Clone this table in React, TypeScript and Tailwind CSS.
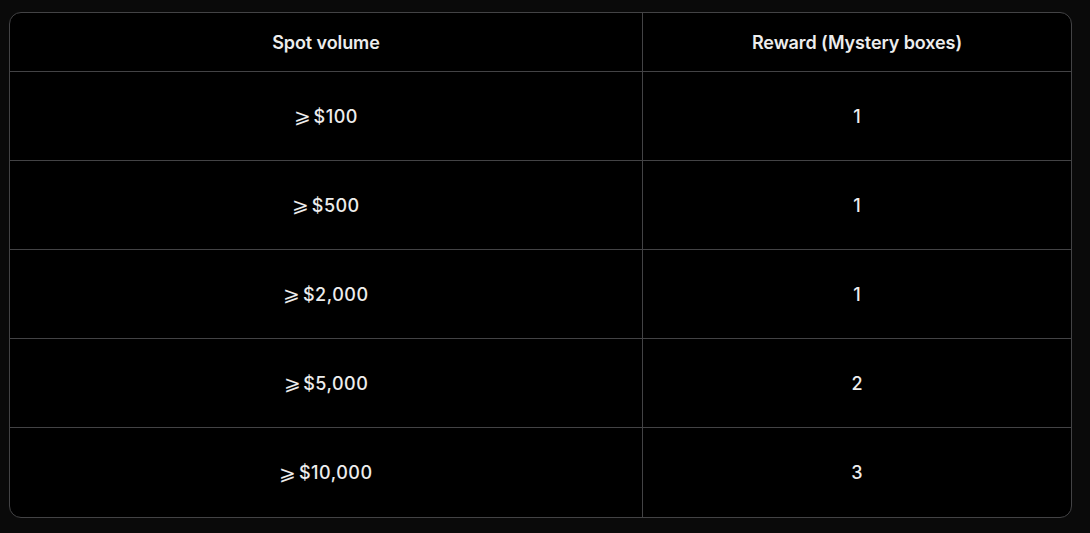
import React from 'react';

const rows = [
  { volume: '$100', reward: '1' },
  { volume: '$500', reward: '1' },
  { volume: '$2,000', reward: '1' },
  { volume: '$5,000', reward: '2' },
  { volume: '$10,000', reward: '3' },
];

const App: React.FC = () => {
  return (
    <div className="min-h-screen w-full bg-[#0a0a0a] px-[9px] pt-[12px]" style={{ fontFamily: 'Inter, "Noto Sans", sans-serif' }}>
      <div className="w-[1063px] overflow-hidden rounded-[12px] border border-[#434345] bg-black text-[#ededed]">
        <div className="grid h-[59px] grid-cols-[633px_1fr] border-b border-[#434345] text-[18px] font-semibold tracking-[-0.1px]">
          <div className="flex items-center justify-center border-r border-[#434345]">Spot volume</div>
          <div className="flex items-center justify-center">Reward (Mystery boxes)</div>
        </div>
        {rows.map((r, i) => (
          <div
            key={r.volume}
            className={`grid h-[89px] grid-cols-[633px_1fr] text-[18px] font-medium ${i < rows.length - 1 ? 'border-b border-[#434345]' : ''}`}
          >
            <div className="flex items-center justify-center border-r border-[#434345] tracking-[0.5px]">
              <span className="mr-[2px] text-[20px] leading-none">⩾</span>
              {r.volume}
            </div>
            <div className="flex items-center justify-center">{r.reward}</div>
          </div>
        ))}
      </div>
    </div>
  );
};

export default App;
